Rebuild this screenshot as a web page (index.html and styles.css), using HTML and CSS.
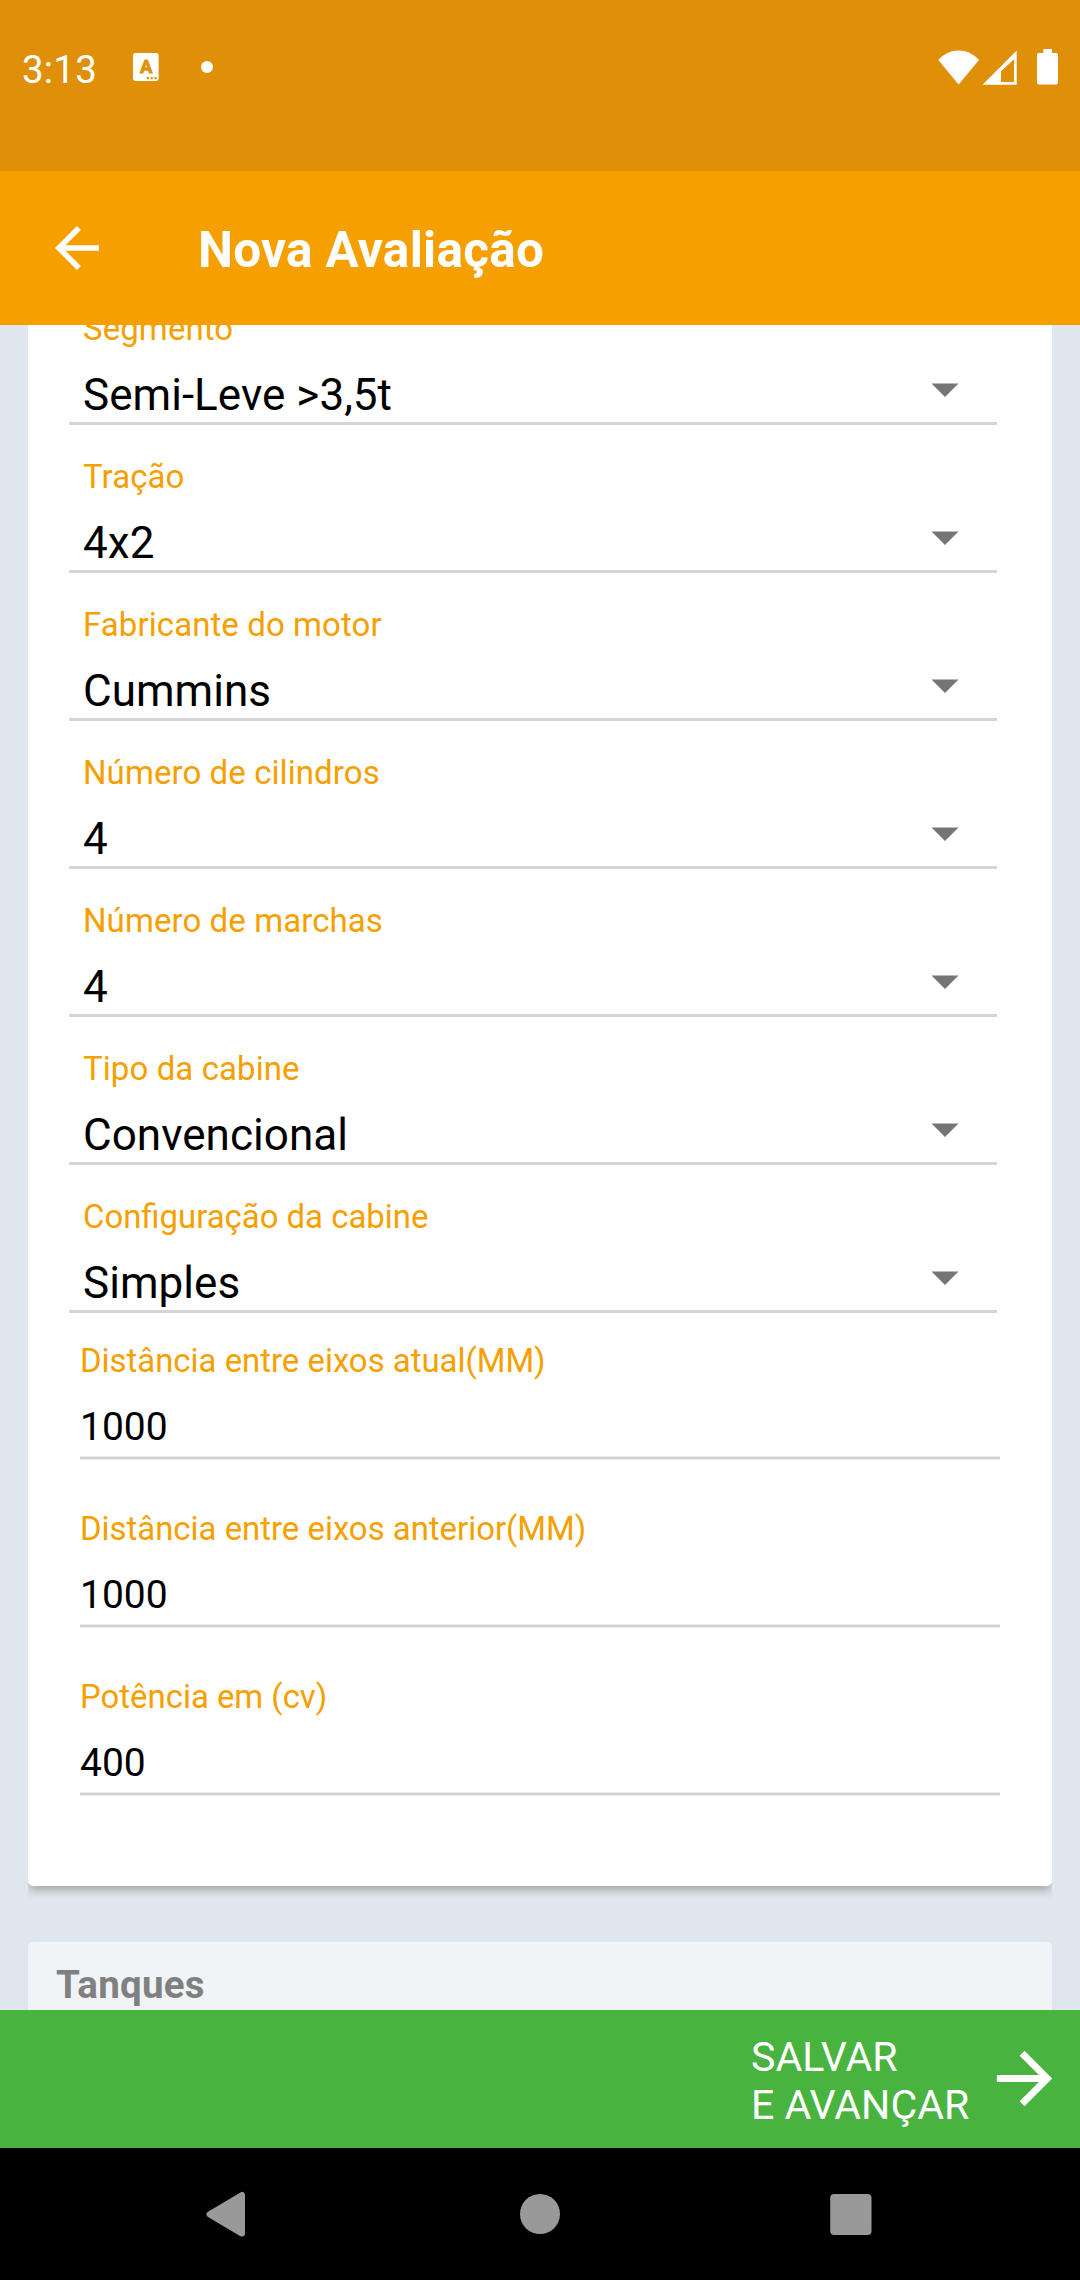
FILE: index.html
```html
<!DOCTYPE html>
<html lang="pt-BR">
<head>
<meta charset="utf-8">
<title>Nova Avaliação</title>
<link rel="stylesheet" href="styles.css">
</head>
<body>
<div class="screen">
  <header class="status-bar">
    <span class="clock">3:13</span>
    <svg class="note-icon" viewBox="0 0 26 28"><rect width="25.6" height="28" rx="2.4" fill="#fff"/><text class="note-letter" x="13.1" y="20.4" text-anchor="middle">A</text><path d="M13.7 24h2.2v2.2h-2.2zM17.6 24h2.2v2.2h-2.2zM21.4 24h2.2v2.2h-2.2z" fill="#df9008"/></svg>
    <span class="dot"></span>
    <svg class="signals" viewBox="0 0 122 36" fill="#fff"><path d="M0.3 11 C12 -1.6 29.4 -1.6 41 11 L20.6 35.4Z"/><path fill-rule="evenodd" d="M78.7 1.5V35.7H44.5ZM76 10.3L63 22.3V33H76Z"/><path d="M105.4 0h8.6v4h4.2q1.8 0 1.8 1.8v28q0 1.8-1.8 1.8h-17.4q-1.8 0-1.8-1.8v-28q0-1.8 1.8-1.8h4.6z"/></svg>
  </header>
  <div class="app-bar">
    <svg class="back" viewBox="0 0 24 24" fill="#fff"><path d="M20 11H7.83l5.59-5.59L12 4l-8 8 8 8 1.41-1.41L7.83 13H20z"/></svg>
    <h1 class="title">Nova Avaliação</h1>
  </div>
  <main class="content">
    <section class="card">
      <div class="select"><div class="label">Segmento</div><div class="value">Semi-Leve &gt;3,5t<svg class="caret" viewBox="0 0 28 14"><path d="M.5 .5H27.5L14 14z"/></svg></div></div>
      <div class="select"><div class="label">Tração</div><div class="value">4x2<svg class="caret" viewBox="0 0 28 14"><path d="M.5 .5H27.5L14 14z"/></svg></div></div>
      <div class="select"><div class="label">Fabricante do motor</div><div class="value">Cummins<svg class="caret" viewBox="0 0 28 14"><path d="M.5 .5H27.5L14 14z"/></svg></div></div>
      <div class="select"><div class="label">Número de cilindros</div><div class="value">4<svg class="caret" viewBox="0 0 28 14"><path d="M.5 .5H27.5L14 14z"/></svg></div></div>
      <div class="select"><div class="label">Número de marchas</div><div class="value">4<svg class="caret" viewBox="0 0 28 14"><path d="M.5 .5H27.5L14 14z"/></svg></div></div>
      <div class="select"><div class="label">Tipo da cabine</div><div class="value">Convencional<svg class="caret" viewBox="0 0 28 14"><path d="M.5 .5H27.5L14 14z"/></svg></div></div>
      <div class="select"><div class="label joined">Configuração da cabine</div><div class="value">Simples<svg class="caret" viewBox="0 0 28 14"><path d="M.5 .5H27.5L14 14z"/></svg></div></div>
      <div class="input"><div class="label">Distância entre eixos atual(MM)</div><div class="entry">1000</div></div>
      <div class="input"><div class="label">Distância entre eixos anterior(MM)</div><div class="entry">1000</div></div>
      <div class="input"><div class="label">Potência em (cv)</div><div class="entry">400</div></div>
    </section>
    <section class="next-card"><h2 class="heading">Tanques</h2></section>
  </main>
  <div class="action-bar">
    <span class="action-text">SALVAR<br>E AVANÇAR</span>
    <svg class="forward" viewBox="0 0 24 24" fill="#fff"><path d="M12 4l-1.41 1.41L16.17 11H4v2h12.17l-5.58 5.59L12 20l8-8z"/></svg>
  </div>
  <nav class="nav-bar">
    <svg viewBox="0 0 66 66"><path d="M13.5 33.3 L46 14 V52.6Z" stroke="#999" stroke-width="6" stroke-linejoin="round"/></svg>
    <svg viewBox="0 0 66 66"><circle cx="33" cy="33" r="20"/></svg>
    <svg viewBox="0 0 66 66"><rect x="12.2" y="13" width="41.3" height="41" rx="4"/></svg>
  </nav>
</div>
</body>
</html>
```
FILE: styles.css
```css
* { box-sizing: border-box; }
body { margin: 0; font-family: Roboto, "Liberation Sans", sans-serif; }
svg { display: block; flex: none; }
.screen { width: 1080px; height: 2280px; display: flex; flex-direction: column; overflow: hidden; background: #dfe6ed; }

.status-bar { height: 171px; flex: none; display: flex; align-items: flex-start; background: #df9008; color: #fff; padding: 49px 22px 0; }
.clock { width: 111px; font-size: 38.5px; line-height: 42px; letter-spacing: .2px; }
.note-icon { width: 26px; height: 28px; margin-top: 4px; }
.note-letter { font-size: 18.5px; font-weight: 700; fill: #df9008; stroke: #df9008; stroke-width: .8px; stroke-linejoin: round; }
.dot { width: 12px; height: 12px; border-radius: 50%; background: #fff; margin: 12px 0 0 42px; }
.signals { width: 122px; height: 36px; margin: 0 -2px 0 auto; }

.app-bar { height: 154px; flex: none; display: flex; align-items: center; background: #f5a000; color: #fff; padding-left: 44px; }
.back { width: 66px; height: 66px; }
.title { margin: 4px 0 0 88px; font-size: 49.5px; line-height: 60px; font-weight: 700; letter-spacing: .3px; }

.content { height: 1685px; flex: none; overflow: hidden; padding: 0 28px; }
.card { margin-top: -48px; height: 1609px; background: #fff; border-radius: 5px; padding: 0 52px 0 41px; box-shadow: 0 5px 8px -1px rgba(80, 90, 80, .45); clip-path: inset(0 0 -20px 0); }
.label { font-size: 33px; line-height: 40px; color: #f5a000; white-space: nowrap; }
.select { height: 148px; margin-right: 3px; padding: 32px 38px 0 14px; border-bottom: 3px solid #d5d5d5; }
.select .label { letter-spacing: .08px; }
.select .joined { letter-spacing: normal; font-size: 32.9px; }
.value { display: flex; justify-content: space-between; margin-top: 20px; font-size: 44px; line-height: 52px; letter-spacing: .04px; color: #000; white-space: nowrap; }
.caret { width: 28px; height: 14px; margin-top: 14px; fill: #757575; }
.input { height: 168px; margin-left: 11px; padding-top: 28px; }
.input .label { font-size: 32.9px; }
.entry { height: 59px; margin-top: 20px; font-size: 39px; line-height: 52px; color: #000; background: linear-gradient(#ececec 1px, #d3d3d3 1px 3px, #ececec 3px) bottom / 100% 4px no-repeat; }

.next-card { margin-top: 56px; height: 120px; background: #f1f4f7; border-radius: 5px 5px 0 0; padding: 31px 28px; }
.heading { margin: 0; font-size: 38.5px; line-height: 24px; font-weight: 700; letter-spacing: .25px; color: #808080; }

.action-bar { height: 138px; flex: none; display: flex; align-items: center; justify-content: flex-end; background: #49b33f; color: #fff; padding-right: 14px; }
.action-text { width: 232px; padding-top: 3px; font-size: 41.1px; line-height: 48px; }
.forward { width: 83px; height: 83px; margin-bottom: 2px; }

.nav-bar { height: 132px; flex: none; display: flex; align-items: center; justify-content: space-between; background: #000; padding: 0 196px; fill: #999; }
.nav-bar svg { width: 66px; height: 66px; }
```
